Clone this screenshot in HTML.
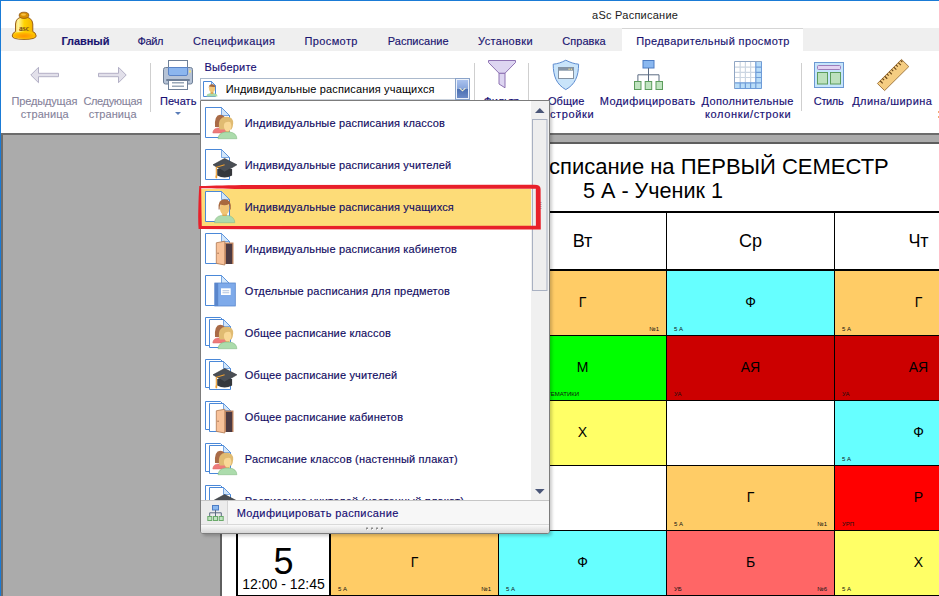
<!DOCTYPE html>
<html><head><meta charset="utf-8">
<style>
html,body{margin:0;padding:0;}
body{width:939px;height:596px;overflow:hidden;position:relative;background:#fff;font-family:"Liberation Sans",sans-serif;}
.a{position:absolute;}
.t{position:absolute;white-space:nowrap;line-height:1;}
.tab{color:#1a1470;font-size:11.6px;-webkit-text-stroke:0.15px #1a1470;}
.rb{color:#180f74;font-size:11.8px;-webkit-text-stroke:0.15px #180f74;}
.dis{color:#85829a;font-size:11.8px;-webkit-text-stroke:0.1px #85829a;}
.cell{position:absolute;overflow:hidden;}
.hd{font-size:18px;line-height:1;text-align:center;padding-top:19px;box-sizing:border-box;color:#000;}
.lt{position:absolute;left:0;right:0;top:24px;text-align:center;font-size:14px;line-height:1;color:#000;}
.sl{position:absolute;left:7px;top:55px;font-size:6px;line-height:1;color:#111;white-space:nowrap;}
.sr{position:absolute;right:7px;top:55px;font-size:6px;line-height:1;color:#111;white-space:nowrap;}
.num{position:absolute;left:0;right:0;top:13px;text-align:center;font-size:36px;line-height:1;color:#000;}
.tm{position:absolute;left:0;right:0;top:46px;text-align:center;font-size:14px;line-height:1;color:#000;white-space:nowrap;}
.big{position:absolute;font-size:14px;line-height:1;color:#000;}
.sm{position:absolute;font-size:6px;line-height:1;color:#222;}
.it{position:absolute;left:244px;font-size:11px;line-height:1;color:#120c62;white-space:nowrap;-webkit-text-stroke:0.15px #120c62;}
</style></head><body>
<!-- window borders -->
<div class="a" style="left:0;top:0;width:939px;height:1px;background:#1a7bd6"></div>
<div class="a" style="left:0;top:0;width:1px;height:596px;background:#1a7bd6"></div>

<!-- title -->
<div class="t " style="left:592.10px;top:9.69px;font-size:11px;letter-spacing:0.243px;color:#1a1a1a">aSc Расписание</div>

<!-- tab bar -->
<div class="a" style="left:1px;top:28px;width:938px;height:23px;background:#efefef"></div>
<div class="a" style="left:622px;top:28px;width:181px;height:23px;background:#fff;border-top:1px solid #d5d5d5;box-sizing:border-box"></div>
<!-- bell -->
<svg class="a" style="left:8px;top:8px" width="32" height="36" viewBox="8 8 32 36">
  <defs>
    <linearGradient id="bg1" x1="0" y1="0" x2="1" y2="0">
      <stop offset="0" stop-color="#f0b000"/><stop offset="0.25" stop-color="#fff4a0"/><stop offset="0.5" stop-color="#ffd400"/><stop offset="1" stop-color="#f0a800"/>
    </linearGradient>
    <radialGradient id="bg2" cx="0.5" cy="0.6" r="0.6">
      <stop offset="0" stop-color="#ff9400"/><stop offset="0.6" stop-color="#ffb000"/><stop offset="1" stop-color="#ffd000"/>
    </radialGradient>
  </defs>
  <path d="M12.2,36 Q12.5,32.5 15.5,31.5 L15.5,24 Q15.8,17 24,16.8 Q32.2,17 32.8,24 L32.8,31.5 Q35.8,32.5 36.2,36 Q36,39.3 24,39.4 Q12.3,39.3 12.2,36 Z" fill="url(#bg1)" stroke="#8e5410" stroke-width="0.9"/>
  <path d="M13,36 Q13.5,33 17,32.3 Q24,31.6 31.5,32.3 Q35,33 35.4,36 Q35,38.6 24,38.7 Q13.2,38.6 13,36 Z" fill="url(#bg2)"/>
  <ellipse cx="24" cy="15.3" rx="4.8" ry="3.1" fill="#d88e00" stroke="#8e5410" stroke-width="0.8"/>
  <ellipse cx="23.5" cy="14.6" rx="2.5" ry="1.2" fill="#f8c040"/>
  <text x="24" y="31.2" font-family="Liberation Serif" font-size="7.5" fill="#7a4a18" text-anchor="middle" font-weight="bold">asc</text>
</svg>
<div class="t tab" style="left:61.40px;top:35.69px;font-size:11px;letter-spacing:-0.049px;font-weight:bold">Главный</div>
<div class="t tab" style="left:137.40px;top:35.69px;font-size:11px;letter-spacing:-0.342px">Файл</div>
<div class="t tab" style="left:193.00px;top:35.69px;font-size:11px;letter-spacing:0.430px">Спецификация</div>
<div class="t tab" style="left:304.50px;top:35.69px;font-size:11px;letter-spacing:0.383px">Просмотр</div>
<div class="t tab" style="left:387.80px;top:35.69px;font-size:11px;letter-spacing:0.008px">Расписание</div>
<div class="t tab" style="left:478.10px;top:35.69px;font-size:11px;letter-spacing:0.333px">Установки</div>
<div class="t tab" style="left:562.30px;top:35.69px;font-size:11px;letter-spacing:0.044px">Справка</div>
<div class="t tab" style="left:636.30px;top:35.69px;font-size:11px;letter-spacing:0.366px">Предварительный просмотр</div>

<!-- ribbon icons -->
<svg class="a" style="left:0;top:0" width="939" height="133" viewBox="0 0 939 133">
  <!-- prev arrow -->
  <path d="M30.8,75 L38.5,67.3 V73.3 H58.5 V76.7 H38.5 V82.7 Z" fill="#e2e0ea" stroke="#b3b0c6" stroke-width="1"/>
  <!-- next arrow -->
  <path d="M126.2,75 L118.5,67.3 V73.3 H98.5 V76.7 H118.5 V82.7 Z" fill="#e2e0ea" stroke="#b3b0c6" stroke-width="1"/>
  <!-- separators -->
  <rect x="150" y="63" width="1" height="49" fill="#cfcfcf"/>
  <rect x="474" y="63" width="1" height="49" fill="#cfcfcf"/>
  <rect x="528" y="63" width="1" height="49" fill="#cfcfcf"/>
  <rect x="801" y="63" width="1" height="48" fill="#cfcfcf"/>
  <!-- printer -->
  <rect x="168.5" y="60.5" width="19" height="8" fill="#fff" stroke="#6f8098"/>
  <rect x="163.5" y="67.5" width="29" height="16.5" rx="2" fill="#b6c3d6" stroke="#6f8098"/>
  <path d="M168.5,67.5 H187.5 V74 Q187.5,75.5 186,75.5 H170 Q168.5,75.5 168.5,74 Z" fill="#8cb6ee" stroke="#5a84c8"/>
  <rect x="189" y="70.5" width="2" height="2" fill="#f2e27a"/>
  <rect x="166" y="79" width="24" height="2" rx="1" fill="#6f8098"/>
  <rect x="168.5" y="80.5" width="19" height="9" fill="#fff" stroke="#6f8098"/>
  <rect x="172" y="82" width="12" height="1.5" fill="#9aa8b8"/>
  <rect x="172" y="85.5" width="12" height="1.5" fill="#9aa8b8"/>
  <path d="M175,112 H181 L178,115 Z" fill="#5a7db8"/>
  <!-- funnel -->
  <path d="M488.5,60.5 H515.5 V62.5 L505,73.2 V87.8 L499,84 V73.2 L488.5,62.5 Z" fill="#ddd5f1" stroke="#8e72b3" stroke-width="1"/><path d="M498.8,73.3 H505.2" stroke="#8e72b3" stroke-width="1.2"/>
  <!-- shield -->
  <path d="M565.8,60.2 C561.5,62.5 557.5,63.8 553.2,64.2 C553.2,76 556.5,84.5 565.8,89.6 C575.1,84.5 578.6,76 578.6,64.2 C574.3,63.8 570.2,62.5 565.8,60.2 Z" fill="#c9e4fa" stroke="#5e8cd0" stroke-width="1"/>
  <rect x="558.5" y="67.5" width="15" height="11" fill="#fff" stroke="#8492a2"/>
  <rect x="558.5" y="67.5" width="15" height="3.2" fill="#8494a6"/>
  <rect x="568.5" y="68.5" width="1.2" height="1.5" fill="#e8d890"/>
  <rect x="570.8" y="68.5" width="1.2" height="1.5" fill="#e8d890"/>
  <!-- hierarchy -->
  <rect x="643" y="60.5" width="11" height="7.5" fill="#8ab8f0" stroke="#4c7cc4"/>
  <path d="M648.5,68 V81.5 M637.9,81.5 V74.8 H659 V81.5" fill="none" stroke="#5c6c82" stroke-width="1"/>
  <rect x="634.5" y="81.5" width="6.5" height="8" fill="#c0e4c0" stroke="#5c9c5c"/>
  <rect x="645.2" y="81.5" width="6.5" height="8" fill="#c0e4c0" stroke="#5c9c5c"/>
  <rect x="656" y="81.5" width="6.5" height="8" fill="#c0e4c0" stroke="#5c9c5c"/>
  <!-- grid -->
  <g>
    <rect x="734.5" y="61.5" width="27" height="27" fill="#fff"/>
    <path d="M740.2,61.5 V83 M745.4,61.5 V83 M750.6,61.5 V83 M734.5,67.1 H756 M734.5,72.3 H756 M734.5,77.5 H756" stroke="#ccd6e2" stroke-width="1.2" fill="none"/>
    <rect x="755.8" y="61.5" width="5.7" height="27" fill="#b8dcf8"/>
    <rect x="734.5" y="82.8" width="27" height="5.7" fill="#b8dcf8"/>
    <path d="M755.8,61.5 V88.5 M734.5,82.8 H761.5 M740.2,82.8 V88.5 M745.4,82.8 V88.5 M750.6,82.8 V88.5 M755.8,67.1 H761.5 M755.8,72.3 H761.5 M755.8,77.5 H761.5" stroke="#6e9cd8" stroke-width="1.2" fill="none"/>
    <path d="M734.5,88.5 V61.5 H761.5" stroke="#90a6c4" stroke-width="1" fill="none"/>
    <path d="M761.5,61.5 V88.5 H734.5" stroke="#6e9cd8" stroke-width="1" fill="none"/>
  </g>
  <!-- style -->
  <rect x="814.5" y="62.5" width="29" height="25" fill="#c6e5fb" stroke="#6c98d2"/>
  <rect x="817.5" y="65.5" width="23" height="4" rx="1" fill="#e2d3f2" stroke="#9c7cba"/>
  <rect x="817.5" y="72.5" width="10" height="11.5" fill="#bde1bd" stroke="#5c9c5c"/>
  <rect x="830.5" y="72.5" width="10" height="11.5" fill="#bde1bd" stroke="#5c9c5c"/>
  <!-- ruler -->
  <path d="M877.4,83.5 L901.5,59.4 L908.8,66.6 L884.6,90.6 Z" fill="#f5cd82" stroke="#a37a42" stroke-width="1"/>
  <g stroke="#6a4618" stroke-width="1.15"><path d="M880.13,80.77 l2.55,2.55 M882.40,78.50 l1.70,1.70 M884.68,76.22 l2.55,2.55 M886.95,73.95 l1.70,1.70 M889.22,71.68 l2.55,2.55 M891.50,69.40 l1.70,1.70 M893.77,67.13 l2.55,2.55 M896.04,64.86 l1.70,1.70 M898.32,62.58 l2.55,2.55 M900.59,60.31 l1.70,1.70"/></g>
  <rect x="938" y="111" width="1" height="2" fill="#f4a870"/><rect x="938" y="116" width="1" height="2" fill="#f4a870"/>
</svg>
<!-- ribbon labels -->
<div class="t dis" style="left:11.50px;top:95.69px;font-size:11px;letter-spacing:-0.146px">Предыдущая</div>
<div class="t dis" style="left:20.80px;top:108.69px;font-size:11px;letter-spacing:0.058px">страница</div>
<div class="t dis" style="left:83.40px;top:95.69px;font-size:11px;letter-spacing:-0.347px">Следующая</div>
<div class="t dis" style="left:88.70px;top:108.69px;font-size:11px;letter-spacing:0.058px">страница</div>
<div class="t rb" style="left:160.00px;top:95.69px;font-size:11px;letter-spacing:0.079px">Печать</div>
<div class="t rb" style="left:204.50px;top:61.69px;font-size:11px;letter-spacing:0.184px">Выберите</div>
<div class="t rb" style="left:483.40px;top:95.69px;font-size:11px;letter-spacing:-0.127px">Фильтр</div>
<div class="t rb" style="left:548.00px;top:95.69px;font-size:11px;letter-spacing:0.062px">Общие</div>
<div class="t rb" style="left:550.00px;top:108.69px;font-size:11px;letter-spacing:0.612px">стройки</div>
<div class="t rb" style="left:599.70px;top:95.69px;font-size:11px;letter-spacing:0.436px">Модифицировать</div>
<div class="t rb" style="left:701.50px;top:95.69px;font-size:11px;letter-spacing:0.365px">Дополнительные</div>
<div class="t rb" style="left:704.90px;top:108.69px;font-size:11px;letter-spacing:0.658px">колонки/строки</div>
<div class="t rb" style="left:813.80px;top:95.69px;font-size:11px;letter-spacing:-0.361px">Стиль</div>
<div class="t rb" style="left:852.20px;top:95.69px;font-size:11px;letter-spacing:0.458px">Длина/ширина</div>

<!-- grey work area -->
<div class="a" style="left:1px;top:133px;width:938px;height:463px;background:#ababab"></div>
<div class="a" style="left:1px;top:133px;width:938px;height:2px;background:#6c6c6c"></div>
<div class="a" style="left:1px;top:133px;width:2px;height:463px;background:#6c6c6c"></div>

<!-- paper -->
<div class="a" style="left:220px;top:142px;width:719px;height:454px;background:#5e5e5e"></div>
<div class="a" style="left:222px;top:144px;width:717px;height:452px;background:#fff"></div>


<!-- title -->
<div class="t" style="left:549px;top:156px;font-size:22px;color:#000">списание на ПЕРВЫЙ СЕМЕСТР</div>
<div class="t" style="left:583px;top:179.5px;font-size:21.6px;color:#000">5 А - Ученик 1</div>
<!-- table -->
<div class="a" style="left:236px;top:211px;width:703px;height:385px;background:#000"></div>
<div class="cell hd" style="left:238px;top:213px;width:91px;height:56px;background:#fff"></div>
<div class="cell hd" style="left:331px;top:213px;width:167px;height:56px;background:#fff">Пн</div>
<div class="cell hd" style="left:499px;top:213px;width:167px;height:56px;background:#fff">Вт</div>
<div class="cell hd" style="left:667px;top:213px;width:167px;height:56px;background:#fff">Ср</div>
<div class="cell hd" style="left:835px;top:213px;width:167px;height:56px;background:#fff">Чт</div>
<div class="cell" style="left:238px;top:271px;width:91px;height:64px;background:#fff"><div class="num">1</div><div class="tm">08:00 - 08:45</div></div>
<div class="cell" style="left:331px;top:271px;width:167px;height:64px;background:#ffcc66"><div class="lt">Г</div><div class="sl">5 А</div><div class="sr">№1</div></div>
<div class="cell" style="left:499px;top:271px;width:167px;height:64px;background:#ffcc66"><div class="lt">Г</div><div class="sl">5 А</div><div class="sr">№1</div></div>
<div class="cell" style="left:667px;top:271px;width:167px;height:64px;background:#66ffff"><div class="lt">Ф</div><div class="sl">5 А</div></div>
<div class="cell" style="left:835px;top:271px;width:167px;height:64px;background:#ffcc66"><div class="lt">Г</div><div class="sl">5 А</div><div class="sr">№1</div></div>
<div class="cell" style="left:238px;top:336px;width:91px;height:64px;background:#fff"><div class="num">2</div><div class="tm">08:55 - 09:40</div></div>
<div class="cell" style="left:331px;top:336px;width:167px;height:64px;background:#00ff00"><div class="lt">М</div><div class="sl" style="left:auto;right:-81px">МАТЕМАТИКИ</div></div>
<div class="cell" style="left:499px;top:336px;width:167px;height:64px;background:#00ff00"><div class="lt">М</div><div class="sl" style="left:auto;right:87px">МАТЕМАТИКИ</div></div>
<div class="cell" style="left:667px;top:336px;width:167px;height:64px;background:#cc0000"><div class="lt">АЯ</div><div class="sl">УА</div></div>
<div class="cell" style="left:835px;top:336px;width:167px;height:64px;background:#cc0000"><div class="lt">АЯ</div><div class="sl">УА</div></div>
<div class="cell" style="left:238px;top:401px;width:91px;height:64px;background:#fff"><div class="num">3</div><div class="tm">09:50 - 10:35</div></div>
<div class="cell" style="left:331px;top:401px;width:167px;height:64px;background:#ffff66"><div class="lt">Х</div><div class="sl">5 А</div></div>
<div class="cell" style="left:499px;top:401px;width:167px;height:64px;background:#ffff66"><div class="lt">Х</div><div class="sl">5 А</div></div>
<div class="cell" style="left:667px;top:401px;width:167px;height:64px;background:#ffffff"></div>
<div class="cell" style="left:835px;top:401px;width:167px;height:64px;background:#66ffff"><div class="lt">Ф</div><div class="sl">5 А</div></div>
<div class="cell" style="left:238px;top:466px;width:91px;height:64px;background:#fff"><div class="num">4</div><div class="tm">11:05 - 11:50</div></div>
<div class="cell" style="left:331px;top:466px;width:167px;height:64px;background:#ffffff"></div>
<div class="cell" style="left:499px;top:466px;width:167px;height:64px;background:#ffffff"></div>
<div class="cell" style="left:667px;top:466px;width:167px;height:64px;background:#ffcc66"><div class="lt">Г</div><div class="sl">5 А</div><div class="sr">№1</div></div>
<div class="cell" style="left:835px;top:466px;width:167px;height:64px;background:#ff0000"><div class="lt">Р</div><div class="sl">УРП</div></div>
<div class="cell" style="left:238px;top:531px;width:91px;height:64px;background:#fff"><div class="num">5</div><div class="tm">12:00 - 12:45</div></div>
<div class="cell" style="left:331px;top:531px;width:167px;height:64px;background:#ffcc66"><div class="lt">Г</div><div class="sl">5 А</div><div class="sr">№1</div></div>
<div class="cell" style="left:499px;top:531px;width:167px;height:64px;background:#66ffff"><div class="lt">Ф</div><div class="sl">5 А</div></div>
<div class="cell" style="left:667px;top:531px;width:167px;height:64px;background:#ff6666"><div class="lt">Б</div><div class="sl">УБ</div><div class="sr">№6</div></div>
<div class="cell" style="left:835px;top:531px;width:167px;height:64px;background:#ffff66"><div class="lt">Х</div><div class="sl">5 А</div></div>

<!-- popup -->

<!-- combo -->
<div class="a" style="left:200px;top:78px;width:270px;height:22px;box-sizing:border-box;border:1px solid #abb9cc;border-bottom-color:#c9d1dc;background:#fff"></div>
<svg class="a" style="left:200px;top:78px" width="30" height="22" viewBox="0 0 30 22">
  <path d="M3.5,3.5 H11.5 L15.5,7.5 V18.5 H3.5 Z" fill="#fff" stroke="#4a88d8"/>
  <path d="M11.5,3.5 V7.5 H15.5 Z" fill="#d2e6fa" stroke="#4a88d8" stroke-width="0.8"/>
  <path d="M10.5,14.5 Q10,15.5 7.5,16 Q6.5,17 6.5,18.6 H17.5 Q17.5,17 16.5,16 Q14,15.5 13.5,14.5 Z" fill="#a9d9a9"/>
  <rect x="10.7" y="13" width="2.6" height="3" fill="#e0a858"/>
  <ellipse cx="12" cy="10.5" rx="3" ry="3.6" fill="#f2c676"/>
  <path d="M8.8,10.5 Q8.5,6.2 12,6.2 Q15.5,6.2 15.2,10.5 L14.8,9 Q12,9.2 9.2,8.6 Z" fill="#a4683e"/>
</svg>
<div class="t" style="left:225.70px;top:83.69px;font-size:11px;letter-spacing:0.153px;color:#000">Индивидуальные расписания учащихся</div>
<div class="a" style="left:455px;top:78px;width:15px;height:22px;box-sizing:border-box;border:1px solid #8aa3c9;background:#edf2fb"></div>
<div class="a" style="left:457px;top:80px;width:11px;height:18px;background:linear-gradient(#aac2ee,#87a5dc 50%,#4b6fb2 50%,#5a7cbc 75%,#6c8bc8)"></div>
<svg class="a" style="left:455px;top:78px" width="15" height="22"><path d="M4.6,10.2 L7.5,12.8 L10.4,10.2" fill="none" stroke="#f4f0d0" stroke-width="1.1"/></svg>

<div class="a" style="left:203px;top:103px;width:349px;height:433px;border-radius:3px;background:rgba(0,0,0,0.2);filter:blur(1.6px)"></div>
<div class="a" style="left:200px;top:100px;width:350px;height:434px;box-sizing:border-box;border:1px solid #7c7c7c;border-radius:0 0 3px 3px;background:#fff;overflow:hidden">
<div class="a" style="left:0;top:0;width:348px;height:399px;overflow:hidden">
<div class="a" style="left:0;top:88px;width:330px;height:37px;background:#fddc78"></div>
<div class="it" style="left:43.80px;top:16.69px;letter-spacing:0.158px">Индивидуальные расписания классов</div>
<svg class="a" style="left:0;top:0px" width="40" height="42"><g>
    <path d="M4.5,6.5 H20.5 L28.5,14.5 V36.5 H4.5 Z" fill="#fff" stroke="#4a88d8"/>
    <path d="M20.5,6.5 V14.5 H28.5 Z" fill="#d2e6fa" stroke="#4a88d8" stroke-width="0.7"/>
  </g><g>
    <path d="M11.8,32 Q12,27.5 17,26.9 L21.5,26.9 Q24.5,27.5 25.5,32 Z" fill="#ee7a7a" stroke="#d86a6a" stroke-width="0.5"/>
    <path d="M14,26 Q13.2,14 19.2,13.8 Q24.8,14 24.3,20.5 L24,26 Z" fill="#a96b47"/>
    <path d="M18.5,28.5 Q17,23 18.8,19.2 Q21,15.6 26,15.8 Q32.4,16 32.2,22.5 Q32,26 30.5,28.5 Z" fill="#e0bb72"/>
    <rect x="24.6" y="28" width="4" height="3.6" fill="#e6b260"/>
    <ellipse cx="26.6" cy="25" rx="3.7" ry="5.3" fill="#f9d896"/>
    <path d="M22.8,22.5 Q26,19.6 30.4,21.4 L30.6,19.2 Q26,17.2 22.2,20 Z" fill="#e0bb72"/>
    <path d="M17,37.7 Q17.5,32 24,31.1 L29,31.1 Q35.5,32 35.9,37.7 Z" fill="#acdcac" stroke="#86bc86" stroke-width="0.6"/>
  </g></svg>
<div class="it" style="left:43.80px;top:58.69px;letter-spacing:0.158px">Индивидуальные расписания учителей</div>
<svg class="a" style="left:0;top:42px" width="40" height="42"><g>
    <path d="M4.5,6.5 H20.5 L28.5,14.5 V36.5 H4.5 Z" fill="#fff" stroke="#4a88d8"/>
    <path d="M20.5,6.5 V14.5 H28.5 Z" fill="#d2e6fa" stroke="#4a88d8" stroke-width="0.7"/>
  </g><g>
    <path d="M16.2,26 V32.5 Q23.6,36.6 31.1,32.5 V26 Z" fill="#35383c"/>
    <path d="M12,21.8 L23.6,15.5 L35.9,21.8 L23.6,29 Z" fill="#4a4e54" stroke="#2f3236" stroke-width="0.6"/>
    <path d="M23.6,21.8 L15.3,24.3 V33" fill="none" stroke="#f0a030" stroke-width="1.1"/>
    <ellipse cx="15.3" cy="33.8" rx="1" ry="1.6" fill="#f0a030"/>
  </g></svg>
<div class="it" style="left:43.80px;top:100.69px;letter-spacing:0.158px">Индивидуальные расписания учащихся</div>
<svg class="a" style="left:0;top:84px" width="40" height="42"><g>
    <path d="M4.5,6.5 H20.5 L28.5,14.5 V36.5 H4.5 Z" fill="#fff" stroke="#4a88d8"/>
    <path d="M20.5,6.5 V14.5 H28.5 Z" fill="#d2e6fa" stroke="#4a88d8" stroke-width="0.7"/>
  </g><g>
    <path d="M13.5,37.7 Q13.8,31.5 20.5,30.4 L26.8,30.4 Q33.5,31.5 33.8,37.7 Z" fill="#addaad" stroke="#88bc88" stroke-width="0.6"/>
    <rect x="21.4" y="27" width="4.5" height="4" fill="#dca656"/>
    <ellipse cx="23.65" cy="23.4" rx="4.7" ry="6.4" fill="#f1c575"/>
    <path d="M17.6,24.5 Q16.6,14.3 23.7,14.3 Q30.8,14.3 29.8,24.5 L28.9,24.5 Q29,20.8 27.8,19.3 Q23.6,20.9 19.6,19.5 Q18.5,20.8 18.6,24.5 Z" fill="#a8693e"/>
  </g></svg>
<div class="it" style="left:43.80px;top:142.69px;letter-spacing:0.158px">Индивидуальные расписания кабинетов</div>
<svg class="a" style="left:0;top:126px" width="40" height="42"><g>
    <path d="M4.5,6.5 H20.5 L28.5,14.5 V36.5 H4.5 Z" fill="#fff" stroke="#4a88d8"/>
    <path d="M20.5,6.5 V14.5 H28.5 Z" fill="#d2e6fa" stroke="#4a88d8" stroke-width="0.7"/>
  </g><g>
    <rect x="23.5" y="15.5" width="9" height="21.5" fill="#c88c64" />
    <rect x="25" y="16.8" width="6.2" height="20.2" fill="#4c3a42"/>
    <path d="M15.3,15.8 L23.8,14.2 V38 L15.3,36.4 Z" fill="#f8c29a" stroke="#b07850" stroke-width="0.8"/>
    <rect x="16.6" y="25.6" width="0.9" height="1.4" fill="#8a5a3a"/>
  </g></svg>
<div class="it" style="left:43.80px;top:184.69px;letter-spacing:0.158px">Отдельные расписания для предметов</div>
<svg class="a" style="left:0;top:168px" width="40" height="42"><g>
    <path d="M4.5,6.5 H20.5 L28.5,14.5 V36.5 H4.5 Z" fill="#fff" stroke="#4a88d8"/>
    <path d="M20.5,6.5 V14.5 H28.5 Z" fill="#d2e6fa" stroke="#4a88d8" stroke-width="0.7"/>
  </g><g>
    <rect x="13.8" y="14" width="20.5" height="23" fill="#7eaaea" stroke="#5a88cc" stroke-width="0.8"/>
    <rect x="13.8" y="14" width="3.4" height="23" fill="#5a86cc"/>
    <rect x="20" y="19.3" width="9.7" height="6.7" fill="#fff"/>
    <rect x="21.5" y="21.4" width="6.7" height="0.8" fill="#9ab4d8"/>
    <rect x="21.5" y="23.4" width="6.7" height="0.8" fill="#9ab4d8"/>
  </g></svg>
<div class="it" style="left:43.80px;top:226.69px;letter-spacing:0.158px">Общее расписание классов</div>
<svg class="a" style="left:0;top:210px" width="40" height="42"><g>
    <path d="M4.5,6.5 H19.5 L21,8 V34.5 H4.5 Z" fill="#fff" stroke="#4a88d8"/>
    <path d="M8.5,8.5 H22.5 L29.5,15.5 V36.5 H8.5 Z" fill="#fff" stroke="#4a88d8"/>
    <path d="M22.5,8.5 V15.5 H29.5 Z" fill="#d2e6fa" stroke="#4a88d8" stroke-width="0.7"/>
  </g><g>
    <path d="M11.8,32 Q12,27.5 17,26.9 L21.5,26.9 Q24.5,27.5 25.5,32 Z" fill="#ee7a7a" stroke="#d86a6a" stroke-width="0.5"/>
    <path d="M14,26 Q13.2,14 19.2,13.8 Q24.8,14 24.3,20.5 L24,26 Z" fill="#a96b47"/>
    <path d="M18.5,28.5 Q17,23 18.8,19.2 Q21,15.6 26,15.8 Q32.4,16 32.2,22.5 Q32,26 30.5,28.5 Z" fill="#e0bb72"/>
    <rect x="24.6" y="28" width="4" height="3.6" fill="#e6b260"/>
    <ellipse cx="26.6" cy="25" rx="3.7" ry="5.3" fill="#f9d896"/>
    <path d="M22.8,22.5 Q26,19.6 30.4,21.4 L30.6,19.2 Q26,17.2 22.2,20 Z" fill="#e0bb72"/>
    <path d="M17,37.7 Q17.5,32 24,31.1 L29,31.1 Q35.5,32 35.9,37.7 Z" fill="#acdcac" stroke="#86bc86" stroke-width="0.6"/>
  </g></svg>
<div class="it" style="left:43.80px;top:268.69px;letter-spacing:0.158px">Общее расписание учителей</div>
<svg class="a" style="left:0;top:252px" width="40" height="42"><g>
    <path d="M4.5,6.5 H19.5 L21,8 V34.5 H4.5 Z" fill="#fff" stroke="#4a88d8"/>
    <path d="M8.5,8.5 H22.5 L29.5,15.5 V36.5 H8.5 Z" fill="#fff" stroke="#4a88d8"/>
    <path d="M22.5,8.5 V15.5 H29.5 Z" fill="#d2e6fa" stroke="#4a88d8" stroke-width="0.7"/>
  </g><g>
    <path d="M16.2,26 V32.5 Q23.6,36.6 31.1,32.5 V26 Z" fill="#35383c"/>
    <path d="M12,21.8 L23.6,15.5 L35.9,21.8 L23.6,29 Z" fill="#4a4e54" stroke="#2f3236" stroke-width="0.6"/>
    <path d="M23.6,21.8 L15.3,24.3 V33" fill="none" stroke="#f0a030" stroke-width="1.1"/>
    <ellipse cx="15.3" cy="33.8" rx="1" ry="1.6" fill="#f0a030"/>
  </g></svg>
<div class="it" style="left:43.80px;top:310.69px;letter-spacing:0.158px">Общее расписание кабинетов</div>
<svg class="a" style="left:0;top:294px" width="40" height="42"><g>
    <path d="M4.5,6.5 H19.5 L21,8 V34.5 H4.5 Z" fill="#fff" stroke="#4a88d8"/>
    <path d="M8.5,8.5 H22.5 L29.5,15.5 V36.5 H8.5 Z" fill="#fff" stroke="#4a88d8"/>
    <path d="M22.5,8.5 V15.5 H29.5 Z" fill="#d2e6fa" stroke="#4a88d8" stroke-width="0.7"/>
  </g><g>
    <rect x="23.5" y="15.5" width="9" height="21.5" fill="#c88c64" />
    <rect x="25" y="16.8" width="6.2" height="20.2" fill="#4c3a42"/>
    <path d="M15.3,15.8 L23.8,14.2 V38 L15.3,36.4 Z" fill="#f8c29a" stroke="#b07850" stroke-width="0.8"/>
    <rect x="16.6" y="25.6" width="0.9" height="1.4" fill="#8a5a3a"/>
  </g></svg>
<div class="it" style="left:43.80px;top:352.69px;letter-spacing:0.158px">Расписание классов (настенный плакат)</div>
<svg class="a" style="left:0;top:336px" width="40" height="42"><g>
    <path d="M4.5,6.5 H19.5 L21,8 V34.5 H4.5 Z" fill="#fff" stroke="#4a88d8"/>
    <path d="M8.5,8.5 H22.5 L29.5,15.5 V36.5 H8.5 Z" fill="#fff" stroke="#4a88d8"/>
    <path d="M22.5,8.5 V15.5 H29.5 Z" fill="#d2e6fa" stroke="#4a88d8" stroke-width="0.7"/>
  </g><g>
    <path d="M11.8,32 Q12,27.5 17,26.9 L21.5,26.9 Q24.5,27.5 25.5,32 Z" fill="#ee7a7a" stroke="#d86a6a" stroke-width="0.5"/>
    <path d="M14,26 Q13.2,14 19.2,13.8 Q24.8,14 24.3,20.5 L24,26 Z" fill="#a96b47"/>
    <path d="M18.5,28.5 Q17,23 18.8,19.2 Q21,15.6 26,15.8 Q32.4,16 32.2,22.5 Q32,26 30.5,28.5 Z" fill="#e0bb72"/>
    <rect x="24.6" y="28" width="4" height="3.6" fill="#e6b260"/>
    <ellipse cx="26.6" cy="25" rx="3.7" ry="5.3" fill="#f9d896"/>
    <path d="M22.8,22.5 Q26,19.6 30.4,21.4 L30.6,19.2 Q26,17.2 22.2,20 Z" fill="#e0bb72"/>
    <path d="M17,37.7 Q17.5,32 24,31.1 L29,31.1 Q35.5,32 35.9,37.7 Z" fill="#acdcac" stroke="#86bc86" stroke-width="0.6"/>
  </g></svg>
<div class="it" style="left:43.80px;top:394.69px;letter-spacing:0.158px">Расписание учителей (настенный плакат)</div>
<svg class="a" style="left:0;top:378px" width="40" height="42"><g>
    <path d="M4.5,6.5 H19.5 L21,8 V34.5 H4.5 Z" fill="#fff" stroke="#4a88d8"/>
    <path d="M8.5,8.5 H22.5 L29.5,15.5 V36.5 H8.5 Z" fill="#fff" stroke="#4a88d8"/>
    <path d="M22.5,8.5 V15.5 H29.5 Z" fill="#d2e6fa" stroke="#4a88d8" stroke-width="0.7"/>
  </g><g>
    <path d="M16.2,26 V32.5 Q23.6,36.6 31.1,32.5 V26 Z" fill="#35383c"/>
    <path d="M12,21.8 L23.6,15.5 L35.9,21.8 L23.6,29 Z" fill="#4a4e54" stroke="#2f3236" stroke-width="0.6"/>
    <path d="M23.6,21.8 L15.3,24.3 V33" fill="none" stroke="#f0a030" stroke-width="1.1"/>
    <ellipse cx="15.3" cy="33.8" rx="1" ry="1.6" fill="#f0a030"/>
  </g></svg>
</div>
<div class="a" style="left:330px;top:0;width:18px;height:399px;background:#f0f0f0"></div>
<svg class="a" style="left:330px;top:0" width="18" height="399">
  <path d="M4,12 L8.8,7 L13.6,12 Z" fill="#4a5678"/>
  <path d="M4,388 L8.8,393 L13.6,388 Z" fill="#4a5678"/>
  <rect x="1.5" y="18.5" width="14.5" height="171" fill="#eeeeee" stroke="#a9b1c2"/>
  <path d="M5.5,101.5 H10.5 M5.5,103.5 H10.5 M5.5,105.5 H10.5 M5.5,107.5 H10.5" stroke="#9aa2b4" stroke-width="1"/>
</svg>
<div class="a" style="left:0;top:399px;width:348px;height:1px;background:#c6c6c6"></div>
<div class="a" style="left:0;top:400px;width:348px;height:24px;background:#f7f7f7"></div>
<div class="a" style="left:0;top:400px;width:26px;height:24px;background:#ececec;border-right:1px solid #d4d4d4"></div>
<svg class="a" style="left:0;top:400px" width="27" height="24">
  <rect x="11.5" y="4.5" width="6" height="4.5" fill="#8ab8f0" stroke="#4c7cc4"/>
  <path d="M14.5,9 V15.5 M8.7,15.5 V11.8 H20.3 V15.5" fill="none" stroke="#5c6c82" stroke-width="1"/>
  <rect x="6.8" y="15.5" width="4" height="4" fill="#c0e4c0" stroke="#6aaa6a"/>
  <rect x="12.5" y="15.5" width="4" height="4" fill="#c0e4c0" stroke="#6aaa6a"/>
  <rect x="18.2" y="15.5" width="4" height="4" fill="#c0e4c0" stroke="#6aaa6a"/>
</svg>
<div class="t rb" style="left:35.70px;top:406.69px;font-size:11px;letter-spacing:0.367px">Модифицировать расписание</div>
<div class="a" style="left:0;top:423px;width:348px;height:1px;background:#d9d9d9"></div>
<div class="a" style="left:0;top:424px;width:348px;height:9px;background:linear-gradient(#fafafa,#d2d2d2)"></div>
<svg class="a" style="left:160px;top:425px" width="30" height="6"><g fill="#8c8c8c"><rect x="5" y="1.5" width="2" height="2"/><rect x="10" y="1.5" width="2" height="2"/><rect x="15" y="1.5" width="2" height="2"/><rect x="20" y="1.5" width="2" height="2"/></g><g fill="#fff"><rect x="6" y="3" width="1.2" height="1"/><rect x="11" y="3" width="1.2" height="1"/><rect x="16" y="3" width="1.2" height="1"/><rect x="21" y="3" width="1.2" height="1"/></g></svg>

</div>
<svg class="a" style="left:195px;top:182px" width="352" height="52" viewBox="195 182 352 52">
  <path fill-rule="evenodd" d="M199.3,186.1 C215,185.4 228,185 250,184.9 L534.5,184.7 Q540.6,184.8 540.6,189 L540.8,229.6 L198.6,229.1 Q198,222 198.3,210 Q198.6,196 199.3,186.1 Z M201.2,188.3 C215,188.6 228,189 250,189 L535.8,188.7 L535.9,225.8 L201.8,226 Q201.4,210 201.2,188.3 Z" fill="#e8202a"/>
</svg>

</body></html>
